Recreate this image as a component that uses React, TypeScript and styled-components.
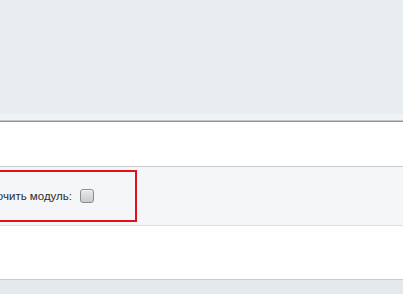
import React from "react";
import styled, { createGlobalStyle } from "styled-components";

const Global = createGlobalStyle`
  html, body { margin: 0; padding: 0; background: #ffffff; overflow: hidden; }
  body { font-family: "Liberation Sans", Arial, sans-serif; }
`;

const Page = styled.div`
  width: 403px;
  height: 294px;
  display: flex;
  flex-direction: column;
  overflow: hidden;
`;

const Header = styled.div`
  height: 114px;
  background: #e8eef0;
`;

const HeaderFoot = styled.div`
  height: 6px;
  background: #eff3f5;
  border-bottom: 1px solid #c4c8ca;
`;

const HeaderShadow = styled.div`
  height: 1px;
  background: #8e9294;
`;

const WhiteRow = styled.div<{ $h: number }>`
  height: ${(p) => p.$h}px;
  background: #ffffff;
`;

const Divider = styled.div<{ $c: string; $h?: number }>`
  height: ${(p) => p.$h ?? 1}px;
  background: ${(p) => p.$c};
`;

const OptionRow = styled.div`
  height: 58px;
  background: #f4f6f7;
  display: flex;
  align-items: flex-start;
  padding-top: 3px;
  box-sizing: border-box;
`;

const Highlight = styled.div`
  margin-left: -40px;
  width: 177px;
  height: 52px;
  box-sizing: border-box;
  border: 2px solid #e3101b;
  display: flex;
  align-items: center;
  justify-content: flex-end;
  padding-right: 41px;
  gap: 8px;
`;

const Label = styled.span`
  font-size: 11.5px;
  color: #2b2b2b;
  white-space: nowrap;
  letter-spacing: 0;
`;

const Check = styled.span`
  width: 12px;
  height: 12px;
  border: 1px solid #8a8d90;
  border-radius: 3px;
  background: linear-gradient(#e8e9ea, #c9cbcd);
  box-shadow: inset 0 1px 0 #f6f6f6;
`;

const Footer = styled.div`
  flex: 1;
  background: #e4eaec;
`;

export default function App() {
  return (
    <>
      <Global />
      <Page>
        <Header />
        <HeaderFoot />
        <HeaderShadow />
        <WhiteRow $h={44} />
        <Divider $c="#c8cbcc" />
        <OptionRow>
          <Highlight>
            <Label>Включить модуль:</Label>
            <Check />
          </Highlight>
        </OptionRow>
        <Divider $c="#dde1e2" />
        <WhiteRow $h={53} />
        <Divider $c="#c8cdd0" />
        <Footer />
      </Page>
    </>
  );
}
